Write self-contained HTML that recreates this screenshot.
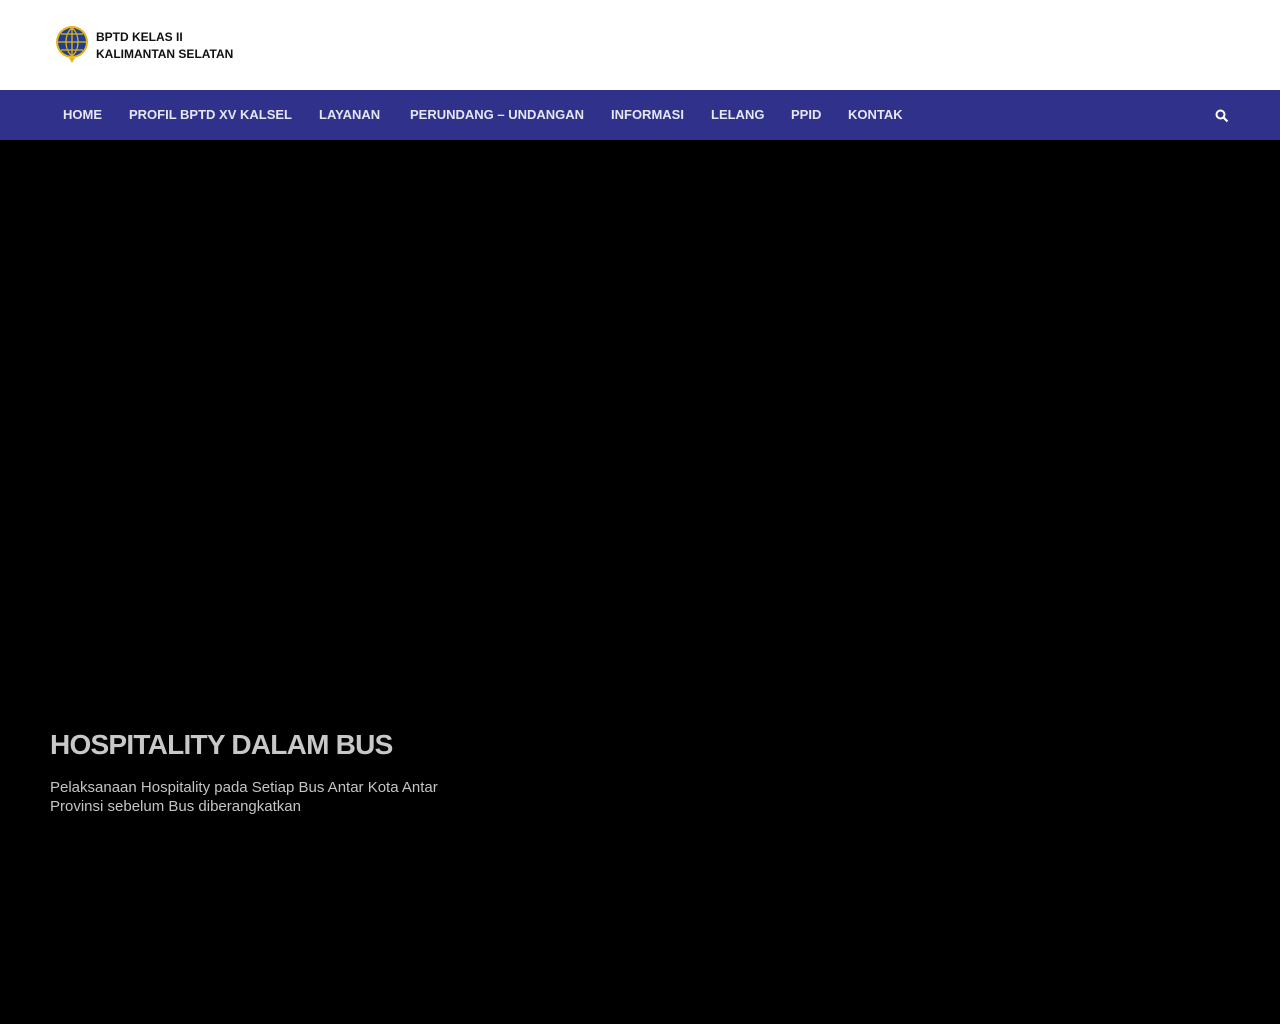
<!DOCTYPE html>
<html><head><style>
body{margin:0;width:1280px;height:1024px;background:#000;font-family:"Liberation Sans",sans-serif;overflow:hidden}
.top{height:90px;background:#fff;position:relative}
.logo{position:absolute;left:55px;top:25px}
.lt{position:absolute;left:96px;top:29px;font-weight:900;font-size:12px;line-height:17px;color:#111}
nav{height:50px;background:#2f318a;position:relative}
nav a{position:absolute;top:0;line-height:50px;color:#e6e6f2;font-weight:bold;font-size:13px;text-decoration:none}
h1{position:absolute;left:50px;top:729px;margin:0;font-size:28px;color:#c8c8c8;font-weight:bold;letter-spacing:-0.75px}
p{position:absolute;left:50px;top:778px;margin:0;width:420px;font-size:15px;line-height:19px;color:#c4c4c4}
</style></head><body>
<div class="top">
<svg class="logo" width="36" height="38" viewBox="0 0 36 38"><circle cx="17" cy="17" r="16" fill="#e8b41c"/><circle cx="17" cy="17" r="14" fill="#1f3f8f"/><path d="M3 17h28M17 3v28M6 9h22M6 25h22M17 3c-8 6-8 22 0 28M17 3c8 6 8 22 0 28" stroke="#e8b41c" stroke-width="1.3" fill="none"/><path d="M14 33l3 5 3-5z" fill="#e8b41c"/></svg>
<div class="lt">BPTD KELAS II<br>KALIMANTAN SELATAN</div>
</div>
<nav>
<a style="left:63px">HOME</a>
<a style="left:129px">PROFIL BPTD XV KALSEL</a>
<a style="left:319px">LAYANAN</a>
<a style="left:410px">PERUNDANG – UNDANGAN</a>
<a style="left:611px">INFORMASI</a>
<a style="left:711px">LELANG</a>
<a style="left:791px">PPID</a>
<a style="left:848px">KONTAK</a>
<svg style="position:absolute;left:1215px;top:19px" width="14" height="14" viewBox="0 0 14 14"><circle cx="5.5" cy="5.5" r="4" stroke="#fff" stroke-width="2" fill="none"/><path d="M8.5 8.5l4 4" stroke="#fff" stroke-width="2.2"/></svg>
</nav>
<h1>HOSPITALITY DALAM BUS</h1>
<p>Pelaksanaan Hospitality pada Setiap Bus Antar Kota Antar Provinsi sebelum Bus diberangkatkan</p>
</body></html>
